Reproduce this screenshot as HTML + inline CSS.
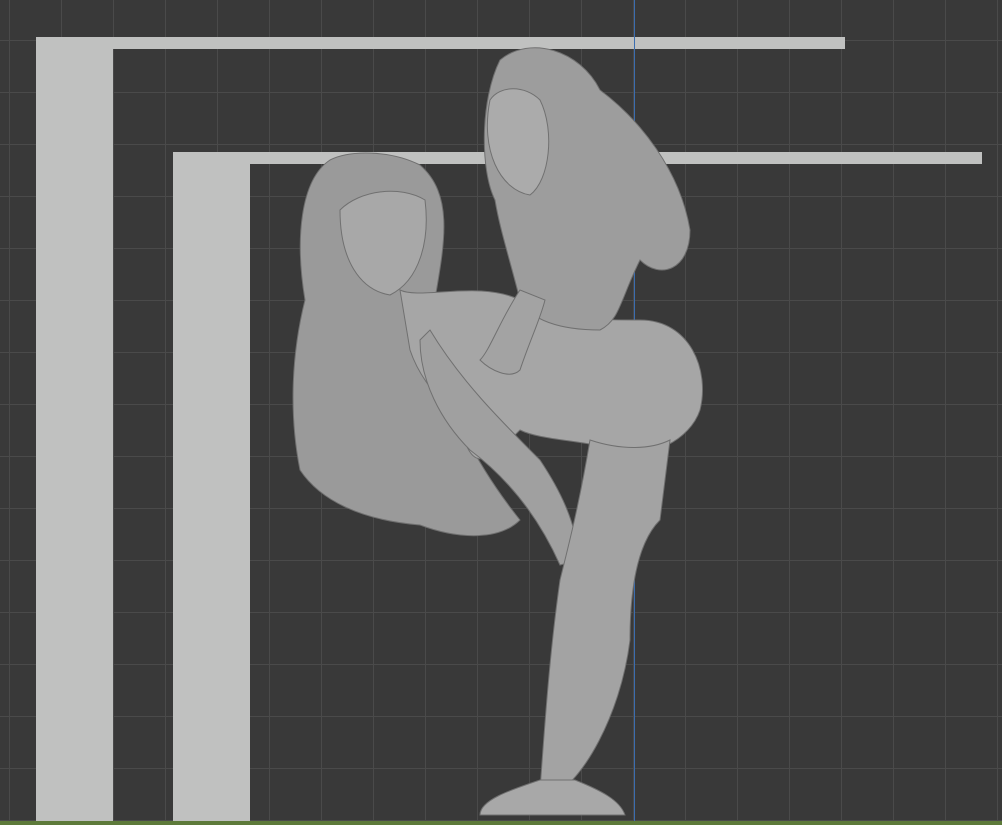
<!DOCTYPE html>
<html><head><style>
html,body{margin:0;padding:0;}
body{width:1002px;height:825px;overflow:hidden;position:relative;
background-color:#393939;
background-image:linear-gradient(#4a4a4a 1px,transparent 1px),linear-gradient(90deg,#4a4a4a 1px,transparent 1px);
background-size:52px 52px;background-position:9px 40px;}
.b{position:absolute;background:#c0c1c0;}
</style></head><body>
<div class="b" style="left:36px;top:37px;width:809px;height:12px"></div>
<div class="b" style="left:36px;top:37px;width:77px;height:788px"></div>
<div class="b" style="left:173px;top:152px;width:809px;height:12px"></div>
<div class="b" style="left:173px;top:152px;width:77px;height:673px"></div>
<div style="position:absolute;left:634px;top:0;width:1px;height:825px;background:#3b6db0"></div>
<div style="position:absolute;left:0;top:821px;width:1002px;height:4px;background:#5d7a3a"></div>
<svg width="1002" height="825" style="position:absolute;left:0;top:0">
<g fill="#9a9a9a" stroke="#707070" stroke-width="1">
<path d="M330 160 C300 180 295 240 305 300 C290 360 290 420 300 470 C320 500 360 520 420 525 C460 540 500 540 520 520 C480 470 440 400 430 330 C440 260 460 200 420 165 C390 150 350 150 330 160Z"/>
<path d="M340 210 C340 260 360 290 390 295 C420 280 430 240 425 200 C400 185 360 190 340 210Z" fill="#a8a8a8"/>
<path d="M400 290 C420 300 480 280 520 300 C560 320 600 320 640 320 C690 320 710 370 700 410 C690 440 650 460 620 450 C580 440 540 440 520 430 C490 460 470 480 460 420 C440 400 420 380 410 350Z" fill="#a6a6a6"/>
<path d="M430 330 C460 380 500 420 540 460 C560 490 575 520 580 560 L560 565 C540 520 510 480 470 450 C440 420 420 380 420 340Z" fill="#a0a0a0"/>
<path d="M590 440 C620 450 650 450 670 440 L660 520 C640 540 630 580 630 640 C620 720 580 780 560 790 L540 790 C545 720 550 650 560 580 C570 540 580 500 590 440Z" fill="#a3a3a3"/>
<path d="M540 780 L575 780 C600 790 620 800 625 815 L480 815 C480 800 510 790 540 780Z" fill="#a8a8a8"/>
<path d="M500 60 C530 35 580 50 600 90 C640 120 680 170 690 230 C690 270 660 280 640 260 C620 300 620 320 600 330 C560 330 530 320 520 300 C510 260 500 230 495 200 C480 170 480 100 500 60Z" fill="#9d9d9d"/>
<path d="M490 100 C480 150 500 190 530 195 C550 180 555 130 540 100 C525 85 500 85 490 100Z" fill="#ababab"/>
<path d="M520 290 C500 320 490 350 480 360 C490 370 510 380 520 370 C530 340 540 320 545 300Z" fill="#a3a3a3"/>
</g>
</svg>
</body></html>
